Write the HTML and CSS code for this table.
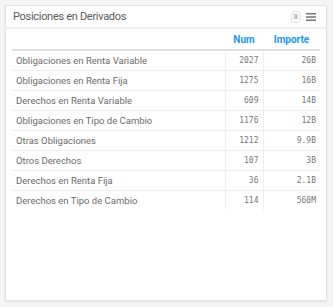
FILE: index.html
```html
<!DOCTYPE html>
<html lang="es">
<head>
    <meta charset="UTF-8">
    <meta name="viewport" content="width=device-width, initial-scale=1.0">
    <title>Posiciones en Derivados</title>
    <link rel="stylesheet" href="styles.css">
</head>
<body>

    <div class="panel">
        <div class="panel-header">
            <span class="panel-title">Posiciones en Derivados</span>
            <div class="panel-tools">
                <span class="badge">8</span>
                <svg class="menu-icon" width="10" height="8" viewBox="0 0 10 8">
                    <rect x="0" y="0" width="10" height="1.5" fill="#777"/>
                    <rect x="0" y="3.25" width="10" height="1.5" fill="#777"/>
                    <rect x="0" y="6.5" width="10" height="1.5" fill="#777"/>
                </svg>
            </div>
        </div>
        <div class="panel-body">
            <table class="data-table">
                <thead>
                    <tr>
                        <th class="col-name"></th>
                        <th class="col-num">Num</th>
                        <th class="col-amount">Importe</th>
                    </tr>
                </thead>
                <tbody>
                    <tr><td>Obligaciones en Renta Variable</td><td class="num">2027</td><td class="num">26B</td></tr>
                    <tr><td>Obligaciones en Renta Fija</td><td class="num">1275</td><td class="num">16B</td></tr>
                    <tr><td>Derechos en Renta Variable</td><td class="num">609</td><td class="num">14B</td></tr>
                    <tr><td>Obligaciones en Tipo de Cambio</td><td class="num">1176</td><td class="num">12B</td></tr>
                    <tr><td>Otras Obligaciones</td><td class="num">1212</td><td class="num">9.9B</td></tr>
                    <tr><td>Otros Derechos</td><td class="num">107</td><td class="num">3B</td></tr>
                    <tr><td>Derechos en Renta Fija</td><td class="num">36</td><td class="num">2.1B</td></tr>
                    <tr><td>Derechos en Tipo de Cambio</td><td class="num">114</td><td class="num">560M</td></tr>
                </tbody>
            </table>
        </div>
    </div>

</body>
</html>
```

FILE: styles.css
```css
body {
    font-family: Roboto, "Liberation Sans", sans-serif;
    background-color: #f5f5f5;
    margin: 0;
    padding: 5px 6px 6px 5px;
}

.panel {
    background-color: #fff;
    border: 1px solid #e2e2e2;
    box-shadow: 0 1px 2px rgba(0, 0, 0, 0.08);
    height: 296px;
    box-sizing: border-box;
}

.panel-header {
    display: flex;
    align-items: center;
    justify-content: space-between;
    height: 21px;
    padding: 0 10px 0 7px;
    border-bottom: 2px solid #efefef;
}

.panel-title {
    font-size: 11px;
    letter-spacing: -0.3px;
    color: #5a5a5a;
}

.panel-tools {
    display: flex;
    align-items: center;
    gap: 5px;
}

.badge {
    font-size: 8px;
    color: #888;
    border: 1px solid #e0e0e0;
    border-radius: 4px;
    padding: 0 2px;
    line-height: 10px;
}

.panel-body {
    padding: 0 6px 0 6px;
}

.data-table {
    width: 100%;
    border-collapse: collapse;
    font-size: 9.5px;
    color: #6b6b6b;
}

.data-table th {
    height: 20px;
    color: #2196f3;
    font-size: 10px;
    font-weight: bold;
    text-align: center;
    border-bottom: 2px solid #e0e0e0;
    padding: 0;
}

.data-table td {
    height: 19px;
    padding: 0 4px;
    border-top: 1px solid #eee;
}

.data-table tbody tr:first-child td {
    border-top: none;
}

.col-num {
    width: 38px;
}

.col-amount {
    width: 57px;
}

.data-table td.num {
    font-family: "DejaVu Sans Mono", monospace;
    font-size: 8px;
    text-align: right;
    color: #777;
    border-left: 1px solid #eee;
}
```
